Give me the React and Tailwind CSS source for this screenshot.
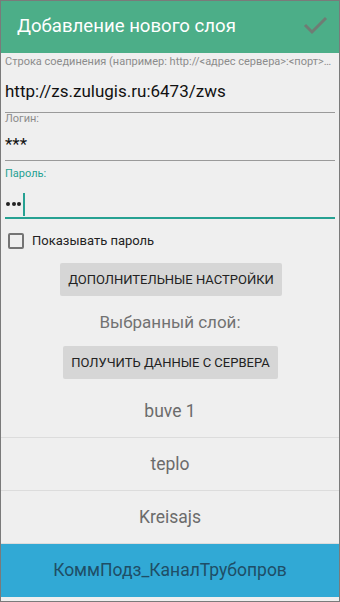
import React from "react";

const font = { fontFamily: "Roboto, 'Noto Sans', sans-serif" };

function Row({ text, active }) {
  return (
    <div
      className={
        active
          ? "h-[53px] flex items-center justify-center bg-[#31a9d5] text-[#1f4e66] text-[17.5px]"
          : "h-[53px] flex items-center justify-center border-b border-[#dcdcdc] text-[#6b6b6b] text-[17.5px]"
      }
    >
      {text}
    </div>
  );
}

export default function App() {
  return (
    <div
      className="w-[340px] h-[602px] border border-[#7a7a7a] bg-[#efefef] flex flex-col overflow-hidden"
      style={font}
    >
      {/* header */}
      <div className="h-[52px] shrink-0 bg-[#4cae88] flex items-center justify-between pl-[16px] pr-[8px]">
        <span className="text-white text-[18.6px]">Добавление нового слоя</span>
        <svg width="30" height="24" viewBox="0 0 30 24" className="mt-[1px]">
          <polyline
            points="4,9 11,16 25,2"
            fill="none"
            stroke="#6f7c74"
            strokeWidth="3"
          />
        </svg>
      </div>

      <div className="px-[4px]">
        <div className="h-[18px] leading-[18px] text-[11px] text-[#8c8c8c] truncate">
          Строка соединения (например: http://&lt;адрес сервера&gt;:&lt;порт&gt;/zws)
        </div>
        <div className="h-[42px] flex items-center border-b border-[#9a9a9a] text-[17px] text-[#111]">
          http://zs.zulugis.ru:6473/zws
        </div>

        <div className="h-[12px] flex items-center text-[11px] text-[#8c8c8c]">Логин:</div>
        <div className="h-[36px] pt-[4px] flex items-center border-b border-[#9a9a9a] text-[17px] text-[#111]">
          ***
        </div>

        <div className="h-[26px] flex items-center text-[11px] text-[#26a192]">Пароль:</div>
        <div className="h-[32px] pt-[4px] flex items-center border-b-2 border-[#26a192]">
          <div className="flex items-center gap-[1.5px] ml-[1px]">
            <span className="w-[4px] h-[4px] rounded-full bg-[#222]"></span>
            <span className="w-[4px] h-[4px] rounded-full bg-[#222]"></span>
            <span className="w-[4px] h-[4px] rounded-full bg-[#222]"></span>
          </div>
          <span className="ml-[2px] w-[2px] h-[23px] bg-[#26a192]"></span>
        </div>
      </div>

      {/* show password */}
      <div className="mt-[13px] ml-[7px] h-[18px] flex items-center gap-[8px]">
        <span className="w-[16px] h-[16px] border-2 border-[#747474] rounded-[2px]"></span>
        <span className="text-[13px] text-[#222]">Показывать пароль</span>
      </div>

      <div className="mt-[13px] flex justify-center">
        <button className="w-[222px] h-[33px] bg-[#d6d6d6] rounded-[2px] text-[13px] text-[#222] ml-[2px]">
          ДОПОЛНИТЕЛЬНЫЕ НАСТРОЙКИ
        </button>
      </div>

      <div className="mt-[13px] h-[28px] flex items-center justify-center text-[17px] text-[#727272]">
        Выбранный слой:
      </div>

      <div className="mt-[9px] flex justify-center">
        <button className="w-[215px] h-[33px] bg-[#d6d6d6] rounded-[2px] text-[13px] text-[#222] ml-[1px]">
          ПОЛУЧИТЬ ДАННЫЕ С СЕРВЕРА
        </button>
      </div>

      <div className="mt-[6px] flex flex-col">
        <Row text="buve 1" />
        <Row text="teplo" />
        <Row text="Kreisajs" />
        <Row text="КоммПодз_КаналТрубопров" active />
      </div>
    </div>
  );
}
